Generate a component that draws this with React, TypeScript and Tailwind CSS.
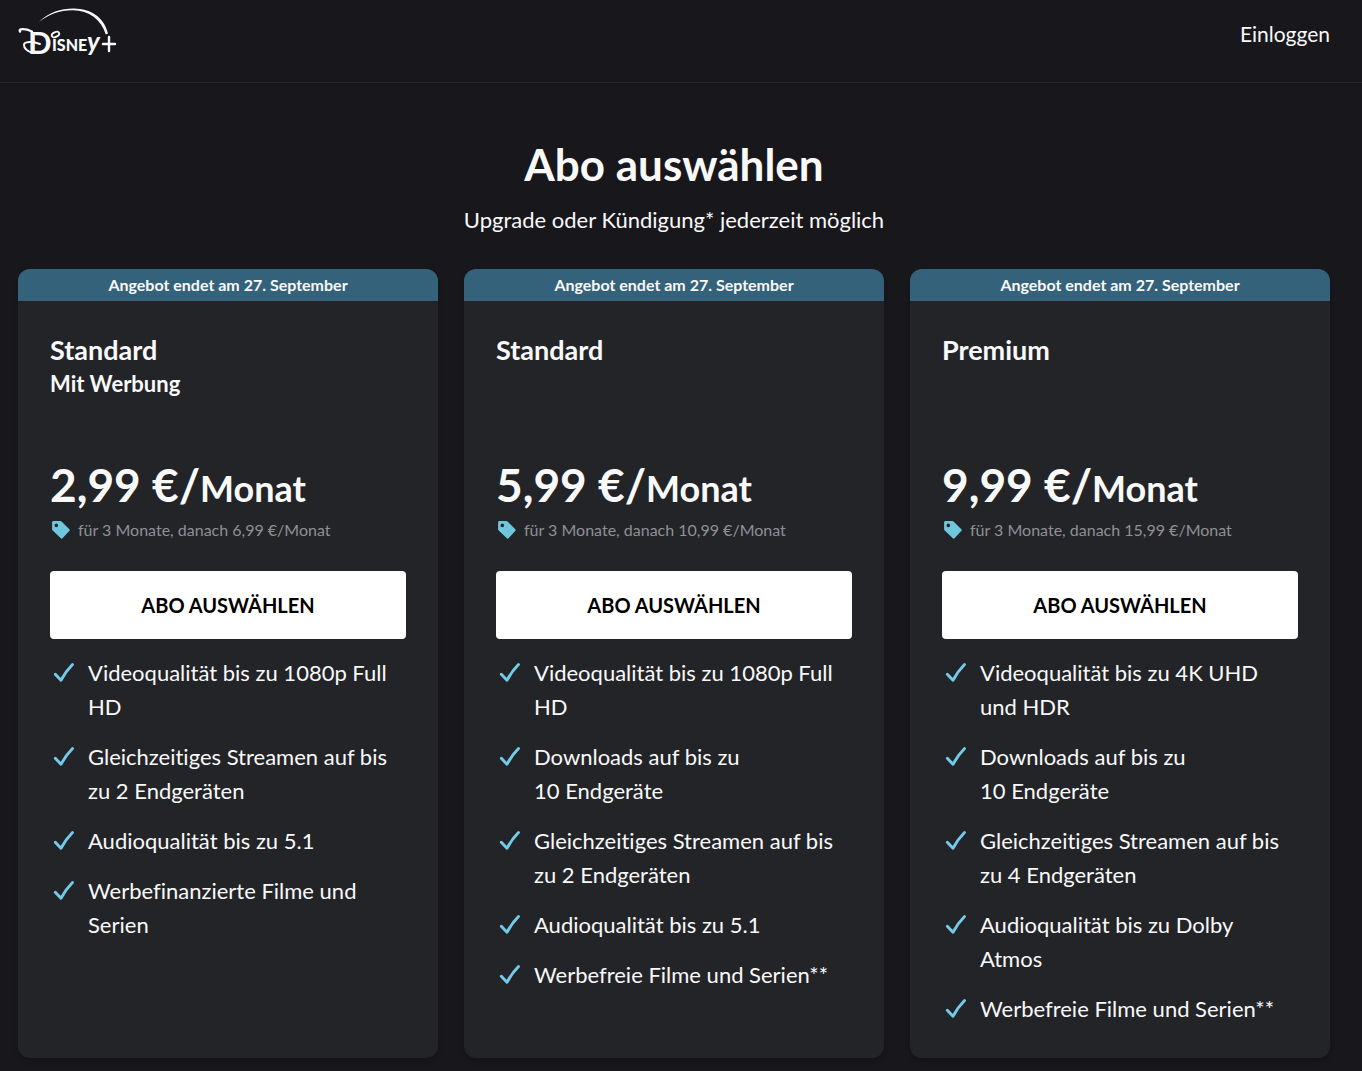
interface Plan {
  id: string;
  name: string;
  subtitle?: string;
  price: string;
  note: string;
  features: string[];
}

const PLANS: Plan[] = [
  {
    id: "standard-ads",
    name: "Standard",
    subtitle: "Mit Werbung",
    price: "2,99 €/",
    note: "für 3 Monate, danach 6,99 €/Monat",
    features: [
      "Videoqualität bis zu 1080p Full HD",
      "Gleichzeitiges Streamen auf bis zu 2 Endgeräten",
      "Audioqualität bis zu 5.1",
      "Werbefinanzierte Filme und Serien",
    ],
  },
  {
    id: "standard",
    name: "Standard",
    price: "5,99 €/",
    note: "für 3 Monate, danach 10,99 €/Monat",
    features: [
      "Videoqualität bis zu 1080p Full HD",
      "Downloads auf bis zu 10\u00a0Endgeräte",
      "Gleichzeitiges Streamen auf bis zu 2 Endgeräten",
      "Audioqualität bis zu 5.1",
      "Werbefreie Filme und Serien**",
    ],
  },
  {
    id: "premium",
    name: "Premium",
    price: "9,99 €/",
    note: "für 3 Monate, danach 15,99 €/Monat",
    features: [
      "Videoqualität bis zu 4K UHD und HDR",
      "Downloads auf bis zu 10\u00a0Endgeräte",
      "Gleichzeitiges Streamen auf bis zu 4 Endgeräten",
      "Audioqualität bis zu Dolby Atmos",
      "Werbefreie Filme und Serien**",
    ],
  },
];

export default function App() {
  return (
    <div className="min-h-screen bg-[#18171c] pb-3 font-['Lato',sans-serif] text-[#f9f9f9] [font-variant-ligatures:none]">
      <header className="flex h-[83px] items-start justify-between border-b border-[#242429] pt-2 pr-8 pl-[18px]">
        <a href="#" aria-label="Disney+">
          <Logo />
        </a>
        <a href="#login" className="pt-3 text-[21px] leading-7">
          Einloggen
        </a>
      </header>
      <main className="pr-8 pl-[18px]">
        <div className="pt-[52px] pb-8 text-center">
          <h1 className="text-[44px] leading-[58px] font-bold">Abo auswählen</h1>
          <p className="mt-2.5 text-[22px] leading-[34px]">Upgrade oder Kündigung* jederzeit möglich</p>
        </div>
        <div className="grid grid-cols-3 gap-[26px]">
          {PLANS.map((p) => (
            <PlanCard key={p.id} plan={p} />
          ))}
        </div>
      </main>
    </div>
  );
}

function PlanCard({ plan }: { plan: Plan }) {
  return (
    <section className="overflow-hidden rounded-xl bg-[#232428] shadow-md">
      <div className="bg-[#35627b] text-center text-[16px] leading-8 font-bold">
        Angebot endet am 27. September
      </div>
      <div className="p-8">
        <div className="min-h-[124px] leading-[34px] font-bold">
          <h2 className="text-[27px]">{plan.name}</h2>
          {plan.subtitle && <p className="text-[22px]">{plan.subtitle}</p>}
        </div>
        <p className="text-[46px] leading-[56px] font-bold whitespace-nowrap">
          {plan.price}
          <span className="text-[36px]">Monat</span>
        </p>
        <p className="flex items-center gap-2 text-[16px] leading-7 whitespace-nowrap text-[#8f9096]">
          <TagIcon />
          {plan.note}
        </p>
        <button
          type="button"
          className="mt-[27px] h-[68px] w-full rounded bg-white text-[20px] font-bold text-black hover:bg-gray-200"
        >
          ABO AUSWÄHLEN
        </button>
        <ul className="mt-[17px] space-y-4 text-[22px] leading-[34px]">
          {plan.features.map((f) => (
            <li key={f} className="flex gap-3">
              <CheckIcon />
              <span>{f}</span>
            </li>
          ))}
        </ul>
      </div>
    </section>
  );
}

function CheckIcon() {
  return (
    <svg viewBox="0 0 26 34" className="h-[34px] w-[26px] shrink-0" fill="none" aria-hidden="true">
      <path
        d="M5.300 18.300 11 24.300Q16 15 22.500 8.500"
        stroke="#73cbe9"
        strokeWidth="2.900"
        strokeLinecap="round"
        strokeLinejoin="round"
      />
    </svg>
  );
}

function TagIcon() {
  return (
    <svg viewBox="0 0 19 20" className="ml-px h-5 w-[19px] shrink-0" aria-hidden="true">
      <path
        fill="#6fc7dd"
        fillRule="evenodd"
        d="M2.500 1h6.800c.6 0 1 .2 1.500.7l7.300 7.200c.9.9.9 1.400.1 2.200l-6.400 6.900c-.9.9-1.400.8-2.200 0L2.200 11c-.6-.6-1.100-1-1.100-1.700V2.400C1.100 1.600 1.700 1 2.500 1Zm2.800 2.600a1.800 1.800 0 1 0 0 3.600 1.800 1.800 0 0 0 0-3.600Z"
      />
    </svg>
  );
}

function Logo() {
  return (
    <svg
      viewBox="0 0 100 56"
      className="h-14 w-[100px] overflow-visible font-['Lato',sans-serif]"
      fill="#f9f9f9"
    >
      {/* arc over the wordmark, thin on the left and thick on the right */}
      <path d="M21 14C31 4 43 .4 56 .5C73 .8 86 9 90 25.500L87.800 26.500C83 11 71 2.500 55 2.200C42 2 31 6 21 14Z" />
      {/* swash and loop around the initial */}
      <g fill="none" stroke="#f9f9f9" strokeLinecap="round">
        <path d="M2 23.500C0 20.500 7 20.300 14 23.500" strokeWidth="2.400" />
        <path d="M22 36C14 33 6 33.500 6 37C6 41 10 43.500 15 45" strokeWidth="2" />
        <ellipse cx="37.500" cy="26.500" rx="4" ry="2.300" strokeWidth="1.800" transform="rotate(-25 37.500 26.500)" />
      </g>
      <text className="text-[16px] font-black">
        <tspan x="10" y="46" className="text-[31px] font-bold">D</tspan>
        <tspan x="34" y="43">ISNE</tspan>
        <tspan x="69" y="43" className="text-[26px] font-bold italic">y</tspan>
      </text>
      <path d="M91 29V43M85 36H97" stroke="#f9f9f9" strokeWidth="2.400" strokeLinecap="round" />
    </svg>
  );
}
